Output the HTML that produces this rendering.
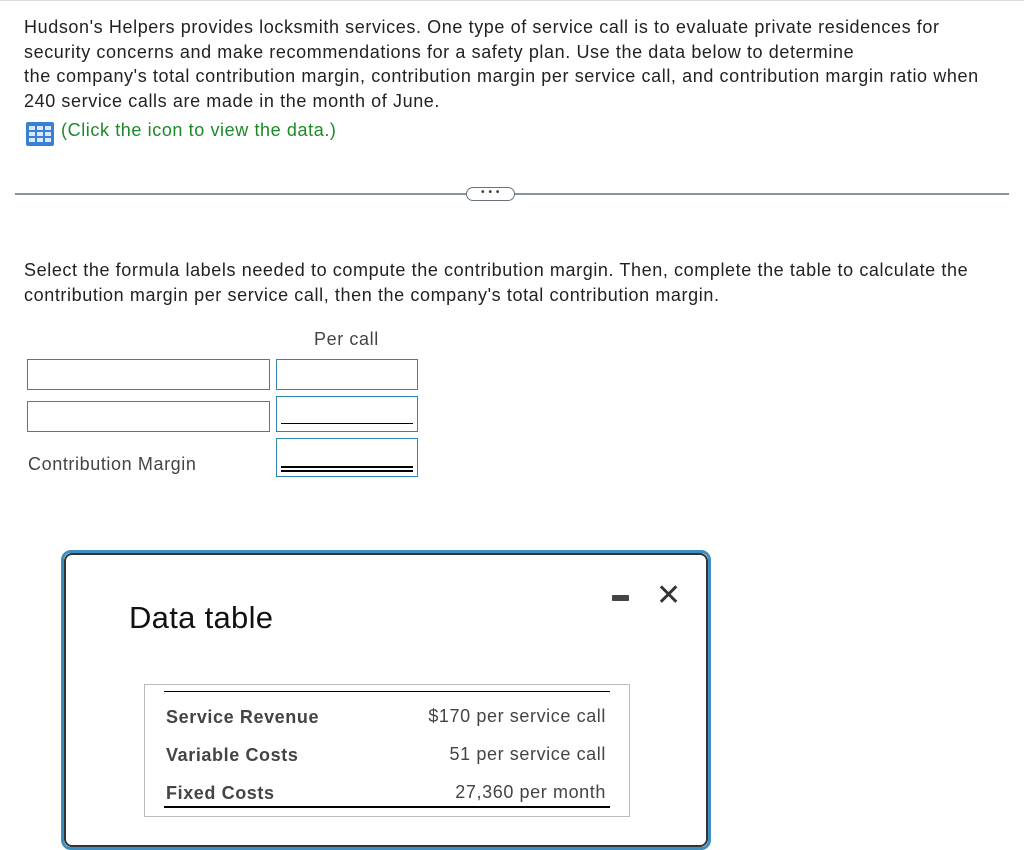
<!DOCTYPE html>
<html><head><style>
body{margin:0;width:1024px;height:830px;overflow:hidden;background:#fff;font-family:"Liberation Sans",Arial,sans-serif;color:#222;position:relative;letter-spacing:0.6px}
.a{position:absolute;white-space:nowrap}
.t{font-size:18px}
.box{position:absolute;border:1px solid #2f86b0;box-sizing:border-box;background:#fff}
</style></head><body>
<div class="a" style="left:0;top:0;width:1024px;height:1px;background:#ddd"></div>
<div class="a t" style="left:24px;top:15px;line-height:24.5px">Hudson's Helpers provides locksmith services. One type of service call is to evaluate private residences for<br>security concerns and make recommendations for a safety plan. Use the data below to determine<br>the company's total contribution margin, contribution margin per service call, and contribution margin ratio when<br>240 service calls are made in the month of June.</div>
<svg class="a" style="left:26px;top:122px" width="28" height="24" viewBox="0 0 28 24"><rect x="0" y="0" width="28" height="24" rx="2" fill="#3a7fd6"/><g fill="#dbe8fa"><rect x="3" y="4" width="6" height="4"/><rect x="11" y="4" width="6" height="4"/><rect x="19" y="4" width="6" height="4"/><rect x="3" y="10" width="6" height="4"/><rect x="11" y="10" width="6" height="4"/><rect x="19" y="10" width="6" height="4"/><rect x="3" y="16" width="6" height="4"/><rect x="11" y="16" width="6" height="4"/><rect x="19" y="16" width="6" height="4"/></g></svg>
<div class="a t" style="left:61px;top:120px;color:#1a8a26">(Click the icon to view the data.)</div>
<div class="a" style="left:15px;top:193px;width:994px;height:2px;background:#8a939c"></div>
<div class="a" style="left:466px;top:187px;width:47px;height:12px;border:1.5px solid #6a737c;border-radius:7px;background:#fff;font-size:10px;line-height:9px;text-align:center;color:#444;font-weight:bold">• • •</div>
<div class="a t" style="left:24px;top:258px;line-height:24.5px">Select the formula labels needed to compute the contribution margin. Then, complete the table to calculate the<br>contribution margin per service call, then the company's total contribution margin.</div>
<div class="a t" style="left:314px;top:329px;color:#444">Per call</div>
<div class="box" style="left:27px;top:359px;width:243px;height:31px"></div>
<div class="box" style="left:276px;top:359px;width:142px;height:31px"></div>
<div class="box" style="left:27px;top:401px;width:243px;height:31px"></div>
<div class="box" style="left:276px;top:396px;width:142px;height:36px"><div class="a" style="left:4px;top:26px;width:132px;height:1px;background:#000"></div></div>
<div class="a t" style="left:28px;top:454px;color:#444">Contribution Margin</div>
<div class="box" style="left:276px;top:438px;width:142px;height:39px"><div class="a" style="left:4px;top:27px;width:132px;height:2px;background:#000"></div><div class="a" style="left:4px;top:31px;width:132px;height:2px;background:#000"></div></div>
<div class="a" style="left:61px;top:550px;width:650px;height:300px;border:3px solid #3e8ec0;border-radius:10px;box-sizing:border-box"><div class="a" style="left:0;top:0;right:0;bottom:0;border:2px solid #333;border-radius:8px"></div></div>
<div class="a" style="left:129px;top:600px;font-size:31px;letter-spacing:0.3px;color:#111">Data table</div>
<div class="a" style="left:612px;top:595px;width:17px;height:6px;background:#444;border-radius:1px"></div>
<div class="a" style="left:656px;top:578px;font-size:30px;color:#333;font-weight:300">✕</div>
<div class="a" style="left:144px;top:684px;width:486px;height:133px;border:1px solid #bbb;box-sizing:border-box"></div>
<div class="a" style="left:164px;top:691px;width:446px;height:1px;background:#000"></div>
<div class="a" style="left:164px;top:806px;width:446px;height:2px;background:#000"></div>
<div class="a t" style="left:166px;top:707px;font-weight:bold;color:#444">Service Revenue</div>
<div class="a t" style="left:166px;top:745px;font-weight:bold;color:#444">Variable Costs</div>
<div class="a t" style="left:166px;top:783px;font-weight:bold;color:#444">Fixed Costs</div>
<div class="a t" style="right:418px;top:706px;color:#444">$170 per service call</div>
<div class="a t" style="right:418px;top:744px;color:#444">51 per service call</div>
<div class="a t" style="right:418px;top:782px;color:#444">27,360 per month</div>
</body></html>
